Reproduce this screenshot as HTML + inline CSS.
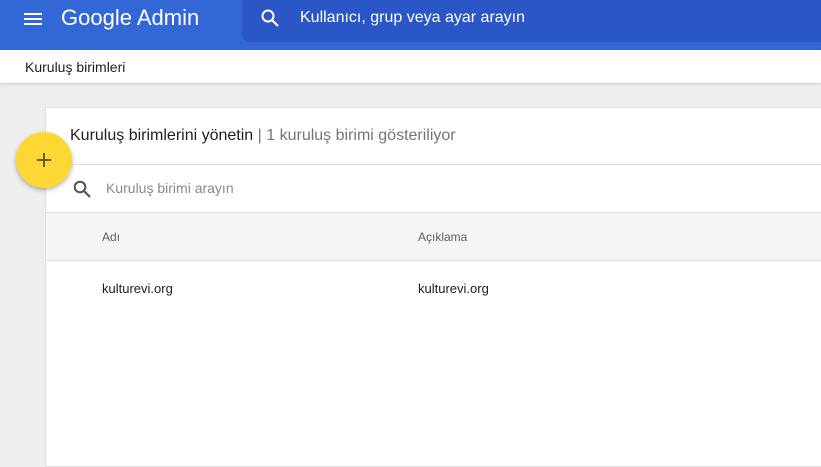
<!DOCTYPE html>
<html><head><style>
*{margin:0;padding:0;box-sizing:border-box}
body{width:821px;height:423px;overflow:hidden;background:#eeeeee;font-family:"Liberation Sans",Arial,sans-serif;position:relative}
.top{position:absolute;left:0;top:0;width:821px;height:50px;background:#3367d6}
.srch{position:absolute;left:242px;top:0;width:600px;height:42px;background:#2a56c6;border-radius:0 0 0 8px}
.t{position:absolute;white-space:nowrap}
.bc{position:absolute;left:0;top:50px;width:821px;height:33px;background:#fff;box-shadow:0 1px 3px rgba(0,0,0,.15)}
.card{position:absolute;left:45px;top:107px;width:790px;height:360px;background:#fff;border:1px solid #e0e0e0}
.fab{position:absolute;left:16px;top:132px;width:56px;height:56px;border-radius:50%;background:#fdd835;box-shadow:0 2px 5px rgba(0,0,0,.3)}
</style></head><body>
<div class="top"></div>
<div class="srch"></div>
<svg style="position:absolute;left:24px;top:11px" width="18" height="16"><rect x="0" y="2" width="18" height="2" fill="#fff"/><rect x="0" y="7" width="18" height="2" fill="#fff"/><rect x="0" y="12" width="18" height="2" fill="#fff"/></svg>
<div class="t" style="left:61px;top:5px;font-size:22px;color:#fff">Google Admin</div>
<svg style="position:absolute;left:261px;top:9px" width="18" height="18"><circle cx="7" cy="7" r="5.5" stroke="#fff" stroke-width="2" fill="none"/><line x1="11" y1="11" x2="17" y2="17" stroke="#fff" stroke-width="2.2"/></svg>
<div class="t" style="left:300px;top:9px;font-size:16px;color:#fff">Kullanıcı, grup veya ayar arayın</div>
<div class="bc"></div>
<div class="t" style="left:25px;top:59px;font-size:14px;color:#212121">Kuruluş birimleri</div>
<div class="card">
<div class="t" style="left:24px;top:19px;font-size:16px;color:#212121"><span style="font-weight:500">Kuruluş birimlerini yönetin</span> <span style="color:#757575">| 1 kuruluş birimi gösteriliyor</span></div>
<div style="position:absolute;left:0;top:56px;width:100%;height:1px;background:#e0e0e0"></div>
<svg style="position:absolute;left:27px;top:72px" width="18" height="18"><circle cx="7" cy="7" r="5.3" stroke="#555" stroke-width="2" fill="none"/><line x1="11" y1="11" x2="17" y2="17" stroke="#555" stroke-width="2.2"/></svg>
<div class="t" style="left:60px;top:72px;font-size:14px;color:#8a8a8a">Kuruluş birimi arayın</div>
<div style="position:absolute;left:0;top:104px;width:100%;height:49px;background:#f5f5f5;border-top:1px solid #e0e0e0;border-bottom:1px solid #e0e0e0"></div>
<div class="t" style="left:56px;top:122px;font-size:12px;color:#616161">Adı</div>
<div class="t" style="left:372px;top:122px;font-size:12px;color:#616161">Açıklama</div>
<div class="t" style="left:56px;top:173px;font-size:13px;color:#212121">kulturevi.org</div>
<div class="t" style="left:372px;top:173px;font-size:13px;color:#212121">kulturevi.org</div>
</div>
<div class="fab"></div>
<svg style="position:absolute;left:37px;top:153px" width="14" height="14"><rect x="6" y="0" width="2" height="14" fill="#6d5a10"/><rect x="0" y="6" width="14" height="2" fill="#6d5a10"/></svg>
</body></html>
